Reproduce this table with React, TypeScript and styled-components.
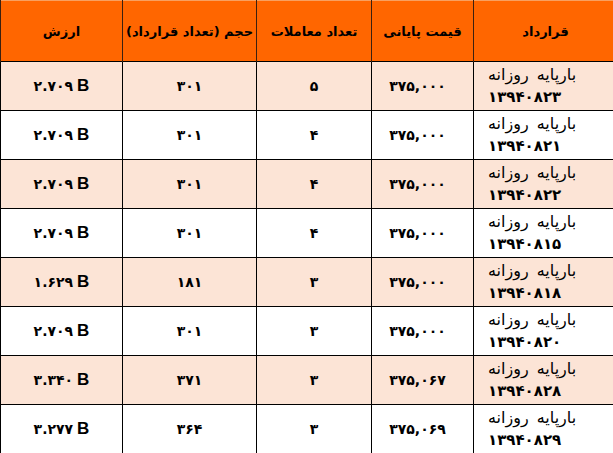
import React from "react";
import styled, { createGlobalStyle } from "styled-components";

const GlobalStyle = createGlobalStyle`
  html, body { margin: 0; padding: 0; background: #ffffff; }
  body { font-family: "DejaVu Sans", sans-serif; }
`;

const Table = styled.table`
  direction: rtl;
  width: 612px;
  table-layout: fixed;
  border-collapse: collapse;
  font-family: "DejaVu Sans", sans-serif;
  color: #000;
`;

const HeadCell = styled.th<{ $w: number }>`
  width: ${(p) => p.$w}px;
  height: 60px;
  padding: 0;
  background: #ff6600;
  font-size: 13px;
  font-weight: bold;
  text-align: center;
  vertical-align: middle;
  border-left: 1px solid #3a2010;
  border-right: 1px solid #3a2010;
  border-top: 1px solid #f8a060;
  white-space: nowrap;
`;

const Row = styled.tr<{ $alt: boolean }>`
  background: ${(p) => (p.$alt ? "#fce4d6" : "#ffffff")};
`;

const Cell = styled.td`
  height: 48px;
  padding: 0;
  border: 1px solid #000;
  text-align: center;
  vertical-align: middle;
  font-size: 14px;
  font-weight: bold;
`;

const ContractCell = styled(Cell)`
  text-align: left;
  padding-left: 14px;
  line-height: 23px;
  white-space: nowrap;
`;

const ContractName = styled.div`
  font-weight: normal;
  font-size: 16px;
  word-spacing: 3px;
  direction: rtl;
  text-align: left;
`;

const ContractCode = styled.div`
  font-weight: bold;
  font-size: 15px;
  letter-spacing: 2px;
`;

const Value = styled.span`
  direction: ltr;
  unicode-bidi: isolate;
  display: inline-block;
`;

const Billion = styled.span`
  font-family: "Liberation Sans", Arial, sans-serif;
  font-size: 17px;
  font-weight: bold;
  margin-left: 4px;
`;

const Price = styled.span`
  display: inline-block;
  margin-right: 10px;
`;

const columns: { title: string; w: number }[] = [
  { title: "قرارداد", w: 143 },
  { title: "قیمت پایانی", w: 101 },
  { title: "تعداد معاملات", w: 114 },
  { title: "حجم (تعداد قرارداد)", w: 133 },
  { title: "ارزش", w: 121 },
];

const rows = [
  { code: "۱۳۹۴۰۸۲۳", price: "۳۷۵,۰۰۰", trades: "۵", vol: "۳۰۱", value: "۲.۷۰۹" },
  { code: "۱۳۹۴۰۸۲۱", price: "۳۷۵,۰۰۰", trades: "۴", vol: "۳۰۱", value: "۲.۷۰۹" },
  { code: "۱۳۹۴۰۸۲۲", price: "۳۷۵,۰۰۰", trades: "۴", vol: "۳۰۱", value: "۲.۷۰۹" },
  { code: "۱۳۹۴۰۸۱۵", price: "۳۷۵,۰۰۰", trades: "۴", vol: "۳۰۱", value: "۲.۷۰۹" },
  { code: "۱۳۹۴۰۸۱۸", price: "۳۷۵,۰۰۰", trades: "۳", vol: "۱۸۱", value: "۱.۶۲۹" },
  { code: "۱۳۹۴۰۸۲۰", price: "۳۷۵,۰۰۰", trades: "۳", vol: "۳۰۱", value: "۲.۷۰۹" },
  { code: "۱۳۹۴۰۸۲۸", price: "۳۷۵,۰۶۷", trades: "۳", vol: "۳۷۱", value: "۳.۳۴۰" },
  { code: "۱۳۹۴۰۸۲۹", price: "۳۷۵,۰۶۹", trades: "۳", vol: "۳۶۴", value: "۳.۲۷۷" },
];

export default function App() {
  return (
    <>
      <GlobalStyle />
      <Table>
        <thead>
          <tr>
            {columns.map((c) => (
              <HeadCell key={c.title} $w={c.w}>
                {c.title}
              </HeadCell>
            ))}
          </tr>
        </thead>
        <tbody>
          {rows.map((r, i) => (
            <Row key={r.code} $alt={i % 2 === 0}>
              <ContractCell>
                <ContractName>بارپایه روزانه</ContractName>
                <ContractCode>{r.code}</ContractCode>
              </ContractCell>
              <Cell>
                <Price>{r.price}</Price>
              </Cell>
              <Cell>{r.trades}</Cell>
              <Cell>{r.vol}</Cell>
              <Cell>
                <Value>
                  {r.value}
                  <Billion>B</Billion>
                </Value>
              </Cell>
            </Row>
          ))}
        </tbody>
      </Table>
    </>
  );
}
